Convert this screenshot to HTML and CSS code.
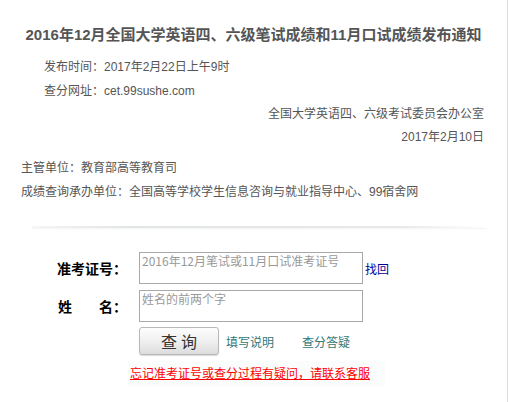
FILE: index.html
```html
<!DOCTYPE html>
<html lang="zh">
<head>
<meta charset="utf-8">
<title>成绩发布通知</title>
<link rel="stylesheet" href="styles.css">
</head>
<body>
<div class="page">
  <h1 class="title">2016年12月全国大学英语四、六级笔试成绩和11月口试成绩发布通知</h1>
  <div class="info">
    <p>发布时间：2017年2月22日上午9时</p>
    <p>查分网址：cet.99sushe.com</p>
  </div>
  <div class="sign">
    <p>全国大学英语四、六级考试委员会办公室</p>
    <p>2017年2月10日</p>
  </div>
  <div class="units">
    <p>主管单位：教育部高等教育司</p>
    <p>成绩查询承办单位：全国高等学校学生信息咨询与就业指导中心、99宿舍网</p>
  </div>
  <div class="sep"></div>
  <form class="form">
    <div class="row">
      <label class="lbl">准考证号：</label>
      <div class="box">2016年12月笔试或11月口试准考证号</div>
      <a class="find" href="#">找回</a>
    </div>
    <div class="row">
      <label class="lbl"><span>姓</span><span>名：</span></label>
      <div class="box">姓名的前两个字</div>
    </div>
    <div class="actions">
      <button type="button" class="btn">查询</button>
      <a class="help" href="#">填写说明</a>
      <a class="help" href="#">查分答疑</a>
    </div>
    <div class="contact"><a href="#">忘记准考证号或查分过程有疑问，请联系客服</a></div>
  </form>
</div>
</body>
</html>
```
FILE: styles.css
```css
html, body {
  margin: 0;
  padding: 0;
  background: #fff;
}
body {
  font-family: "Liberation Sans", Arial, "Noto Sans CJK SC", sans-serif;
}
.page {
  width: 507px;
  height: 402px;
  border-right: 1px solid #dcdcdc;
  box-sizing: content-box;
  overflow: hidden;
}
p { margin: 0; }
.title {
  margin: 26px 0 0;
  text-align: center;
  font-size: 15px;
  line-height: 18px;
  font-weight: bold;
  color: #555;
}
.info {
  margin-top: 11px;
  padding-left: 44px;
  font-size: 12px;
  line-height: 24px;
  color: #555;
}
.sign {
  padding-right: 23px;
  text-align: right;
  font-size: 12px;
  line-height: 23px;
  color: #555;
}
.units {
  margin-top: 7px;
  padding-left: 21px;
  font-size: 12px;
  line-height: 24px;
  color: #555;
}
.sep {
  margin: 22px 20px 0 32px;
  height: 2px;
  background: linear-gradient(to right, rgba(220,225,225,0.3), #e3e6e6 20%, #e6e8e8 80%, rgba(230,232,232,0));
  box-shadow: 0 1px 2px rgba(0,0,0,0.05);
}
.form {
  margin-top: 24px;
  font-family: "Noto Sans CJK SC", sans-serif;
}
.row {
  display: flex;
  align-items: center;
  margin-bottom: 6px;
}
.lbl {
  width: 70px;
  margin-left: 57px;
  margin-right: 12px;
  font-size: 14px;
  font-weight: bold;
  color: #000;
  display: flex;
  justify-content: space-between;
  white-space: nowrap;
}
.lbl span:first-child { padding-left: 1px; }
.box {
  width: 218px;
  height: 30px;
  border: 1px solid #a8a8a8;
  padding: 0 2px;
  font-size: 12px;
  line-height: 16px;
  color: #999;
  box-sizing: content-box;
}
.find {
  margin-left: 2px;
  font-size: 12px;
  color: #00009c;
  text-decoration: none;
}
.actions {
  display: flex;
  align-items: center;
  margin-left: 139px;
  margin-top: -1px;
}
.btn {
  width: 80px;
  height: 28px;
  border: 1px solid #b8b8b8;
  border-radius: 3px;
  background: linear-gradient(#fdfdfd, #f0f0f0 50%, #dcdcdc);
  font-family: "Noto Sans CJK SC", sans-serif;
  font-size: 16px;
  letter-spacing: 4px;
  padding: 0 0 0 4px;
  color: #333;
  box-shadow: 0 1px 1px rgba(0,0,0,0.15);
}
.help {
  font-size: 12px;
  color: #317878;
  text-decoration: none;
  margin-left: 7px;
}
.help + .help { margin-left: 28px; }
.contact {
  margin: 6px 0 0 128px;
  width: 255px;
  padding: 4px 0 6px 2px;
  background: #fbfdfd;
  font-size: 12px;
  line-height: 16px;
}
.contact a {
  color: #ff0000;
  text-decoration: underline;
}
```
